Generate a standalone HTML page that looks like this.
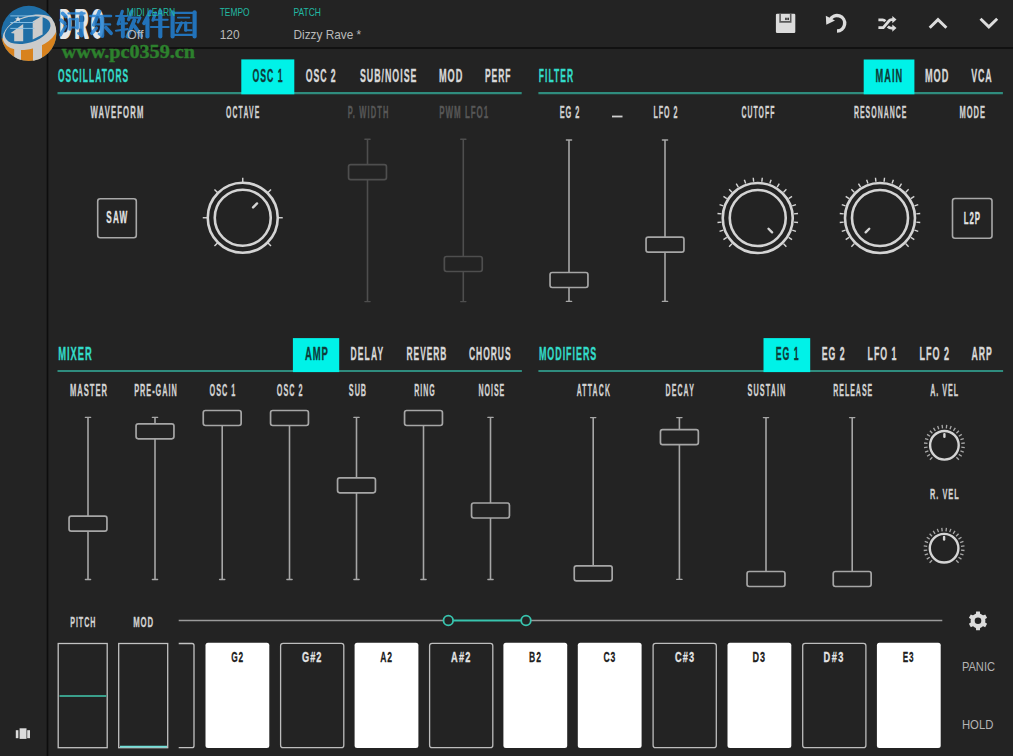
<!DOCTYPE html><html><head><meta charset="utf-8"><style>html,body{margin:0;padding:0;background:#232323;overflow:hidden}svg{display:block}</style></head><body>
<svg width="1013" height="756" viewBox="0 0 1013 756">
<rect x="0" y="0" width="1013" height="756" rx="0" fill="#232323"/>
<line x1="47.5" y1="0" x2="47.5" y2="756" stroke="#0d0d0d" stroke-width="1.6" stroke-linecap="butt"/>
<line x1="47.5" y1="48" x2="1013" y2="48" stroke="#0d0d0d" stroke-width="1.6" stroke-linecap="butt"/>
<rect x="775.9" y="13.8" width="19.4" height="19.2" rx="1.2" fill="#dcdcdc"/>
<path d="M780.1,13.8 V21.9 H790.7 V13.8" fill="none" stroke="#5a5a5a" stroke-width="1.6"/>
<rect x="785.1" y="17.7" width="1.7" height="2.4" fill="#3a3a3a"/><rect x="787.3" y="17.7" width="1.7" height="2.4" fill="#3a3a3a"/>
<path d="M830.2,19.6 A7.7,7.7 0 1 1 837,30.95" fill="none" stroke="#dcdcdc" stroke-width="3.4"/>
<path d="M825.8,15.8 L826.3,24.8 L835,20.6 Z" fill="#dcdcdc"/>
<g fill="none" stroke="#dcdcdc" stroke-width="2.9"><path d="M878.4,19.9 H882.6 Q884.2,19.9 885.3,21.2"/><path d="M878.4,27.6 H883.3 L889.2,20.7 Q890,19.6 891.5,19.6 H893"/><path d="M887.8,26.4 Q889.4,28.1 891.5,28.1 H893"/></g>
<path d="M892.3,15.9 L896.5,19.6 L892.3,23.3 Z" fill="#dcdcdc"/>
<path d="M892.3,24.4 L896.5,28.1 L892.3,31.8 Z" fill="#dcdcdc"/>
<path d="M929.7,27.7 L938,19.6 L946.4,27.8" fill="none" stroke="#dcdcdc" stroke-width="2.9"/>
<path d="M980.5,18.8 L988.85,26.9 L997.2,18.8" fill="none" stroke="#dcdcdc" stroke-width="2.9"/>
<text transform="translate(57.88 81.83) scale(0.4515458354715529 1)" font-family="Liberation Sans" font-weight="bold" font-size="18.70" fill="#33dbc9" stroke="#33dbc9" stroke-width="0.34" stroke-linejoin="round" textLength="155.79" lengthAdjust="spacing">OSCILLATORS</text>
<line x1="57.5" y1="93.2" x2="521.7" y2="93.2" stroke="#2f8c7e" stroke-width="2.2" stroke-linecap="butt"/>
<rect x="241.3" y="59.4" width="53" height="34.9" rx="0" fill="#00f2e8"/>
<text transform="translate(252.48 81.83) scale(0.45323925709619955 1)" font-family="Liberation Sans" font-weight="bold" font-size="19.26" fill="#0e3c3a" stroke="#0e3c3a" stroke-width="0.35" stroke-linejoin="round" textLength="66.28" lengthAdjust="spacing">OSC 1</text>
<text transform="translate(305.68 81.83) scale(0.45323925709619906 1)" font-family="Liberation Sans" font-weight="bold" font-size="19.26" fill="#d8d8d8" stroke="#d8d8d8" stroke-width="0.35" stroke-linejoin="round" textLength="66.28" lengthAdjust="spacing">OSC 2</text>
<text transform="translate(359.88 81.83) scale(0.45959786010638914 1)" font-family="Liberation Sans" font-weight="bold" font-size="19.26" fill="#d8d8d8" stroke="#d8d8d8" stroke-width="0.35" stroke-linejoin="round" textLength="123.02" lengthAdjust="spacing">SUB/NOISE</text>
<text transform="translate(438.98 81.83) scale(0.4784219513852827 1)" font-family="Liberation Sans" font-weight="bold" font-size="19.26" fill="#d8d8d8" stroke="#d8d8d8" stroke-width="0.35" stroke-linejoin="round" textLength="48.77" lengthAdjust="spacing">MOD</text>
<text transform="translate(484.88 81.83) scale(0.44381495753996325 1)" font-family="Liberation Sans" font-weight="bold" font-size="19.26" fill="#d8d8d8" stroke="#d8d8d8" stroke-width="0.35" stroke-linejoin="round" textLength="57.78" lengthAdjust="spacing">PERF</text>
<text transform="translate(90.57 117.86) scale(0.48680466664442634 1)" font-family="Liberation Sans" font-weight="bold" font-size="15.86" fill="#d2d2d2" stroke="#d2d2d2" stroke-width="0.29" stroke-linejoin="round" textLength="108.38" lengthAdjust="spacing">WAVEFORM</text>
<text transform="translate(225.96 117.86) scale(0.43266629425394754 1)" font-family="Liberation Sans" font-weight="bold" font-size="15.86" fill="#d2d2d2" stroke="#d2d2d2" stroke-width="0.29" stroke-linejoin="round" textLength="77.37" lengthAdjust="spacing">OCTAVE</text>
<text transform="translate(347.67 117.86) scale(0.47354475427535536 1)" font-family="Liberation Sans" font-weight="bold" font-size="15.86" fill="#575757" stroke="#575757" stroke-width="0.29" stroke-linejoin="round" textLength="85.87" lengthAdjust="spacing">P. WIDTH</text>
<text transform="translate(439.27 117.86) scale(0.5028939710948712 1)" font-family="Liberation Sans" font-weight="bold" font-size="15.86" fill="#575757" stroke="#575757" stroke-width="0.29" stroke-linejoin="round" textLength="97.35" lengthAdjust="spacing">PWM LFO1</text>
<rect x="97.7" y="198.7" width="38.6" height="39" rx="2.5" fill="none" stroke="#a8a8a8" stroke-width="1.6"/>
<text transform="translate(106.27 223.45) scale(0.49829545345565757 1)" font-family="Liberation Sans" font-weight="bold" font-size="16.43" fill="#e2e2e2" stroke="#e2e2e2" stroke-width="0.30" stroke-linejoin="round" textLength="42.05" lengthAdjust="spacing">SAW</text>
<line x1="218.00" y1="242.50" x2="214.47" y2="246.03" stroke="#d4d4d4" stroke-width="1.4"/>
<line x1="207.75" y1="217.75" x2="202.75" y2="217.75" stroke="#d4d4d4" stroke-width="1.4"/>
<line x1="218.00" y1="193.00" x2="214.47" y2="189.47" stroke="#d4d4d4" stroke-width="1.4"/>
<line x1="242.75" y1="182.75" x2="242.75" y2="177.75" stroke="#d4d4d4" stroke-width="1.4"/>
<line x1="267.50" y1="193.00" x2="271.03" y2="189.47" stroke="#d4d4d4" stroke-width="1.4"/>
<line x1="277.75" y1="217.75" x2="282.75" y2="217.75" stroke="#d4d4d4" stroke-width="1.4"/>
<line x1="267.50" y1="242.50" x2="271.03" y2="246.03" stroke="#d4d4d4" stroke-width="1.4"/>
<circle cx="242.75" cy="217.75" r="35" fill="#232323" stroke="#d4d4d4" stroke-width="2.6"/>
<circle cx="242.75" cy="217.75" r="28" fill="none" stroke="#d4d4d4" stroke-width="2.6"/>
<line x1="253.07" y1="207.43" x2="257.03" y2="203.47" stroke="#d4d4d4" stroke-width="2.4" stroke-linecap="round"/>
<line x1="367.5" y1="139.3" x2="367.5" y2="301.6" stroke="#4e4e4e" stroke-width="1.6" stroke-linecap="butt"/>
<line x1="364.9" y1="139.3" x2="370.1" y2="139.3" stroke="#4e4e4e" stroke-width="1.4" stroke-linecap="round"/>
<line x1="364.9" y1="301.6" x2="370.1" y2="301.6" stroke="#4e4e4e" stroke-width="1.4" stroke-linecap="round"/>
<rect x="348.55" y="164.6" width="37.9" height="15" rx="2.2" fill="#232323" stroke="#4e4e4e" stroke-width="1.7"/>
<line x1="463.3" y1="139.3" x2="463.3" y2="301.6" stroke="#4e4e4e" stroke-width="1.6" stroke-linecap="butt"/>
<line x1="460.7" y1="139.3" x2="465.90000000000003" y2="139.3" stroke="#4e4e4e" stroke-width="1.4" stroke-linecap="round"/>
<line x1="460.7" y1="301.6" x2="465.90000000000003" y2="301.6" stroke="#4e4e4e" stroke-width="1.4" stroke-linecap="round"/>
<rect x="444.35" y="256.5" width="37.9" height="15" rx="2.2" fill="#232323" stroke="#4e4e4e" stroke-width="1.7"/>
<text transform="translate(538.68 81.83) scale(0.45394454922138344 1)" font-family="Liberation Sans" font-weight="bold" font-size="18.70" fill="#33dbc9" stroke="#33dbc9" stroke-width="0.34" stroke-linejoin="round" textLength="76.10" lengthAdjust="spacing">FILTER</text>
<line x1="538.4" y1="93.2" x2="1002.9" y2="93.2" stroke="#2f8c7e" stroke-width="2.2" stroke-linecap="butt"/>
<rect x="863.7" y="59.5" width="50.7" height="34.8" rx="0" fill="#00f2e8"/>
<text transform="translate(875.58 81.83) scale(0.4815222890879221 1)" font-family="Liberation Sans" font-weight="bold" font-size="19.26" fill="#0e3c3a" stroke="#0e3c3a" stroke-width="0.35" stroke-linejoin="round" textLength="55.10" lengthAdjust="spacing">MAIN</text>
<text transform="translate(924.98 81.83) scale(0.4784219513852827 1)" font-family="Liberation Sans" font-weight="bold" font-size="19.26" fill="#d8d8d8" stroke="#d8d8d8" stroke-width="0.35" stroke-linejoin="round" textLength="48.77" lengthAdjust="spacing">MOD</text>
<text transform="translate(971.18 81.83) scale(0.45980607496872955 1)" font-family="Liberation Sans" font-weight="bold" font-size="19.26" fill="#d8d8d8" stroke="#d8d8d8" stroke-width="0.35" stroke-linejoin="round" textLength="44.67" lengthAdjust="spacing">VCA</text>
<text transform="translate(559.67 117.86) scale(0.46474117338328036 1)" font-family="Liberation Sans" font-weight="bold" font-size="15.86" fill="#d2d2d2" stroke="#d2d2d2" stroke-width="0.29" stroke-linejoin="round" textLength="42.32" lengthAdjust="spacing">EG 2</text>
<line x1="612" y1="116.5" x2="622.5" y2="116.5" stroke="#cfcfcf" stroke-width="1.8" stroke-linecap="butt"/>
<text transform="translate(653.46 117.86) scale(0.4494055879843714 1)" font-family="Liberation Sans" font-weight="bold" font-size="15.86" fill="#d2d2d2" stroke="#d2d2d2" stroke-width="0.29" stroke-linejoin="round" textLength="53.56" lengthAdjust="spacing">LFO 2</text>
<text transform="translate(741.56 117.86) scale(0.4337670232605606 1)" font-family="Liberation Sans" font-weight="bold" font-size="15.86" fill="#d2d2d2" stroke="#d2d2d2" stroke-width="0.29" stroke-linejoin="round" textLength="75.56" lengthAdjust="spacing">CUTOFF</text>
<text transform="translate(853.96 117.86) scale(0.4390285510505593 1)" font-family="Liberation Sans" font-weight="bold" font-size="15.86" fill="#d2d2d2" stroke="#d2d2d2" stroke-width="0.29" stroke-linejoin="round" textLength="119.30" lengthAdjust="spacing">RESONANCE</text>
<text transform="translate(959.47 117.86) scale(0.474894239343678 1)" font-family="Liberation Sans" font-weight="bold" font-size="15.86" fill="#d2d2d2" stroke="#d2d2d2" stroke-width="0.29" stroke-linejoin="round" textLength="53.62" lengthAdjust="spacing">MODE</text>
<line x1="569" y1="140" x2="569" y2="301.4" stroke="#a6a6a6" stroke-width="1.6" stroke-linecap="butt"/>
<line x1="566.4" y1="140" x2="571.6" y2="140" stroke="#a6a6a6" stroke-width="1.4" stroke-linecap="round"/>
<line x1="566.4" y1="301.4" x2="571.6" y2="301.4" stroke="#a6a6a6" stroke-width="1.4" stroke-linecap="round"/>
<rect x="550.05" y="272.5" width="37.9" height="15" rx="2.2" fill="#232323" stroke="#a6a6a6" stroke-width="1.7"/>
<line x1="665" y1="140" x2="665" y2="301.4" stroke="#a6a6a6" stroke-width="1.6" stroke-linecap="butt"/>
<line x1="662.4" y1="140" x2="667.6" y2="140" stroke="#a6a6a6" stroke-width="1.4" stroke-linecap="round"/>
<line x1="662.4" y1="301.4" x2="667.6" y2="301.4" stroke="#a6a6a6" stroke-width="1.4" stroke-linecap="round"/>
<rect x="646.05" y="237.1" width="37.9" height="15" rx="2.2" fill="#232323" stroke="#a6a6a6" stroke-width="1.7"/>
<line x1="731.94" y1="243.81" x2="729.11" y2="246.64" stroke="#d4d4d4" stroke-width="1.4"/>
<line x1="726.84" y1="237.42" x2="723.46" y2="239.55" stroke="#d4d4d4" stroke-width="1.4"/>
<line x1="723.30" y1="230.06" x2="719.52" y2="231.38" stroke="#d4d4d4" stroke-width="1.4"/>
<line x1="721.48" y1="222.09" x2="717.50" y2="222.53" stroke="#d4d4d4" stroke-width="1.4"/>
<line x1="721.48" y1="213.91" x2="717.50" y2="213.47" stroke="#d4d4d4" stroke-width="1.4"/>
<line x1="723.30" y1="205.94" x2="719.52" y2="204.62" stroke="#d4d4d4" stroke-width="1.4"/>
<line x1="726.84" y1="198.58" x2="723.46" y2="196.45" stroke="#d4d4d4" stroke-width="1.4"/>
<line x1="731.94" y1="192.19" x2="729.11" y2="189.36" stroke="#d4d4d4" stroke-width="1.4"/>
<line x1="738.33" y1="187.09" x2="736.20" y2="183.71" stroke="#d4d4d4" stroke-width="1.4"/>
<line x1="745.69" y1="183.55" x2="744.37" y2="179.77" stroke="#d4d4d4" stroke-width="1.4"/>
<line x1="753.66" y1="181.73" x2="753.22" y2="177.75" stroke="#d4d4d4" stroke-width="1.4"/>
<line x1="761.84" y1="181.73" x2="762.28" y2="177.75" stroke="#d4d4d4" stroke-width="1.4"/>
<line x1="769.81" y1="183.55" x2="771.13" y2="179.77" stroke="#d4d4d4" stroke-width="1.4"/>
<line x1="777.17" y1="187.09" x2="779.30" y2="183.71" stroke="#d4d4d4" stroke-width="1.4"/>
<line x1="783.56" y1="192.19" x2="786.39" y2="189.36" stroke="#d4d4d4" stroke-width="1.4"/>
<line x1="788.66" y1="198.58" x2="792.04" y2="196.45" stroke="#d4d4d4" stroke-width="1.4"/>
<line x1="792.20" y1="205.94" x2="795.98" y2="204.62" stroke="#d4d4d4" stroke-width="1.4"/>
<line x1="794.02" y1="213.91" x2="798.00" y2="213.47" stroke="#d4d4d4" stroke-width="1.4"/>
<line x1="794.02" y1="222.09" x2="798.00" y2="222.53" stroke="#d4d4d4" stroke-width="1.4"/>
<line x1="792.20" y1="230.06" x2="795.98" y2="231.38" stroke="#d4d4d4" stroke-width="1.4"/>
<line x1="788.66" y1="237.42" x2="792.04" y2="239.55" stroke="#d4d4d4" stroke-width="1.4"/>
<line x1="783.56" y1="243.81" x2="786.39" y2="246.64" stroke="#d4d4d4" stroke-width="1.4"/>
<circle cx="757.75" cy="218" r="35" fill="#232323" stroke="#d4d4d4" stroke-width="2.6"/>
<circle cx="757.75" cy="218" r="28" fill="none" stroke="#d4d4d4" stroke-width="2.6"/>
<line x1="768.50" y1="228.75" x2="772.10" y2="232.35" stroke="#d4d4d4" stroke-width="2.4" stroke-linecap="round"/>
<line x1="854.19" y1="243.81" x2="851.36" y2="246.64" stroke="#d4d4d4" stroke-width="1.4"/>
<line x1="849.09" y1="237.42" x2="845.71" y2="239.55" stroke="#d4d4d4" stroke-width="1.4"/>
<line x1="845.55" y1="230.06" x2="841.77" y2="231.38" stroke="#d4d4d4" stroke-width="1.4"/>
<line x1="843.73" y1="222.09" x2="839.75" y2="222.53" stroke="#d4d4d4" stroke-width="1.4"/>
<line x1="843.73" y1="213.91" x2="839.75" y2="213.47" stroke="#d4d4d4" stroke-width="1.4"/>
<line x1="845.55" y1="205.94" x2="841.77" y2="204.62" stroke="#d4d4d4" stroke-width="1.4"/>
<line x1="849.09" y1="198.58" x2="845.71" y2="196.45" stroke="#d4d4d4" stroke-width="1.4"/>
<line x1="854.19" y1="192.19" x2="851.36" y2="189.36" stroke="#d4d4d4" stroke-width="1.4"/>
<line x1="860.58" y1="187.09" x2="858.45" y2="183.71" stroke="#d4d4d4" stroke-width="1.4"/>
<line x1="867.94" y1="183.55" x2="866.62" y2="179.77" stroke="#d4d4d4" stroke-width="1.4"/>
<line x1="875.91" y1="181.73" x2="875.47" y2="177.75" stroke="#d4d4d4" stroke-width="1.4"/>
<line x1="884.09" y1="181.73" x2="884.53" y2="177.75" stroke="#d4d4d4" stroke-width="1.4"/>
<line x1="892.06" y1="183.55" x2="893.38" y2="179.77" stroke="#d4d4d4" stroke-width="1.4"/>
<line x1="899.42" y1="187.09" x2="901.55" y2="183.71" stroke="#d4d4d4" stroke-width="1.4"/>
<line x1="905.81" y1="192.19" x2="908.64" y2="189.36" stroke="#d4d4d4" stroke-width="1.4"/>
<line x1="910.91" y1="198.58" x2="914.29" y2="196.45" stroke="#d4d4d4" stroke-width="1.4"/>
<line x1="914.45" y1="205.94" x2="918.23" y2="204.62" stroke="#d4d4d4" stroke-width="1.4"/>
<line x1="916.27" y1="213.91" x2="920.25" y2="213.47" stroke="#d4d4d4" stroke-width="1.4"/>
<line x1="916.27" y1="222.09" x2="920.25" y2="222.53" stroke="#d4d4d4" stroke-width="1.4"/>
<line x1="914.45" y1="230.06" x2="918.23" y2="231.38" stroke="#d4d4d4" stroke-width="1.4"/>
<line x1="910.91" y1="237.42" x2="914.29" y2="239.55" stroke="#d4d4d4" stroke-width="1.4"/>
<line x1="905.81" y1="243.81" x2="908.64" y2="246.64" stroke="#d4d4d4" stroke-width="1.4"/>
<circle cx="880" cy="218" r="35" fill="#232323" stroke="#d4d4d4" stroke-width="2.6"/>
<circle cx="880" cy="218" r="28" fill="none" stroke="#d4d4d4" stroke-width="2.6"/>
<line x1="869.25" y1="228.75" x2="865.65" y2="232.35" stroke="#d4d4d4" stroke-width="2.4" stroke-linecap="round"/>
<rect x="952.5" y="198.5" width="39.5" height="39.8" rx="2.5" fill="none" stroke="#a8a8a8" stroke-width="1.6"/>
<text transform="translate(963.67 223.55) scale(0.4862837410862108 1)" font-family="Liberation Sans" font-weight="bold" font-size="16.15" fill="#e2e2e2" stroke="#e2e2e2" stroke-width="0.29" stroke-linejoin="round" textLength="33.43" lengthAdjust="spacing">L2P</text>
<text transform="translate(58.28 360.04) scale(0.5254926571071215 1)" font-family="Liberation Sans" font-weight="bold" font-size="17.85" fill="#33dbc9" stroke="#33dbc9" stroke-width="0.32" stroke-linejoin="round" textLength="63.81" lengthAdjust="spacing">MIXER</text>
<line x1="57.5" y1="371" x2="521.9" y2="371" stroke="#2f8c7e" stroke-width="2.2" stroke-linecap="butt"/>
<rect x="292.9" y="338.1" width="46.3" height="34.0" rx="0" fill="#00f2e8"/>
<text transform="translate(304.89 359.74) scale(0.522152073696058 1)" font-family="Liberation Sans" font-weight="bold" font-size="18.27" fill="#0e3c3a" stroke="#0e3c3a" stroke-width="0.33" stroke-linejoin="round" textLength="44.10" lengthAdjust="spacing">AMP</text>
<text transform="translate(350.48 359.74) scale(0.4634766231016883 1)" font-family="Liberation Sans" font-weight="bold" font-size="18.27" fill="#d8d8d8" stroke="#d8d8d8" stroke-width="0.33" stroke-linejoin="round" textLength="70.22" lengthAdjust="spacing">DELAY</text>
<text transform="translate(406.58 359.74) scale(0.45965554187903657 1)" font-family="Liberation Sans" font-weight="bold" font-size="18.27" fill="#d8d8d8" stroke="#d8d8d8" stroke-width="0.33" stroke-linejoin="round" textLength="86.69" lengthAdjust="spacing">REVERB</text>
<text transform="translate(468.98 359.74) scale(0.46478000752580406 1)" font-family="Liberation Sans" font-weight="bold" font-size="18.27" fill="#d8d8d8" stroke="#d8d8d8" stroke-width="0.33" stroke-linejoin="round" textLength="89.61" lengthAdjust="spacing">CHORUS</text>
<text transform="translate(69.97 395.56) scale(0.4807619433727961 1)" font-family="Liberation Sans" font-weight="bold" font-size="15.86" fill="#d2d2d2" stroke="#d2d2d2" stroke-width="0.29" stroke-linejoin="round" textLength="77.09" lengthAdjust="spacing">MASTER</text>
<text transform="translate(134.17 395.56) scale(0.4615922194672877 1)" font-family="Liberation Sans" font-weight="bold" font-size="15.86" fill="#d2d2d2" stroke="#d2d2d2" stroke-width="0.29" stroke-linejoin="round" textLength="92.44" lengthAdjust="spacing">PRE-GAIN</text>
<text transform="translate(209.47 395.56) scale(0.46213599278620104 1)" font-family="Liberation Sans" font-weight="bold" font-size="15.86" fill="#d2d2d2" stroke="#d2d2d2" stroke-width="0.29" stroke-linejoin="round" textLength="55.97" lengthAdjust="spacing">OSC 1</text>
<text transform="translate(276.87 395.56) scale(0.4579347564881449 1)" font-family="Liberation Sans" font-weight="bold" font-size="15.86" fill="#d2d2d2" stroke="#d2d2d2" stroke-width="0.29" stroke-linejoin="round" textLength="56.05" lengthAdjust="spacing">OSC 2</text>
<text transform="translate(348.87 395.56) scale(0.4598060749687306 1)" font-family="Liberation Sans" font-weight="bold" font-size="15.86" fill="#d2d2d2" stroke="#d2d2d2" stroke-width="0.29" stroke-linejoin="round" textLength="37.56" lengthAdjust="spacing">SUB</text>
<text transform="translate(414.26 395.56) scale(0.4437949705724993 1)" font-family="Liberation Sans" font-weight="bold" font-size="15.86" fill="#d2d2d2" stroke="#d2d2d2" stroke-width="0.29" stroke-linejoin="round" textLength="46.13" lengthAdjust="spacing">RING</text>
<text transform="translate(478.46 395.56) scale(0.4456751626649916 1)" font-family="Liberation Sans" font-weight="bold" font-size="15.86" fill="#d2d2d2" stroke="#d2d2d2" stroke-width="0.29" stroke-linejoin="round" textLength="58.05" lengthAdjust="spacing">NOISE</text>
<line x1="88" y1="417.4" x2="88" y2="579.5" stroke="#a6a6a6" stroke-width="1.6" stroke-linecap="butt"/>
<line x1="85.4" y1="417.4" x2="90.6" y2="417.4" stroke="#a6a6a6" stroke-width="1.4" stroke-linecap="round"/>
<line x1="85.4" y1="579.5" x2="90.6" y2="579.5" stroke="#a6a6a6" stroke-width="1.4" stroke-linecap="round"/>
<rect x="69.05" y="516.2" width="37.9" height="15" rx="2.2" fill="#232323" stroke="#a6a6a6" stroke-width="1.7"/>
<line x1="155" y1="417.4" x2="155" y2="579.5" stroke="#a6a6a6" stroke-width="1.6" stroke-linecap="butt"/>
<line x1="152.4" y1="417.4" x2="157.6" y2="417.4" stroke="#a6a6a6" stroke-width="1.4" stroke-linecap="round"/>
<line x1="152.4" y1="579.5" x2="157.6" y2="579.5" stroke="#a6a6a6" stroke-width="1.4" stroke-linecap="round"/>
<rect x="136.05" y="423.8" width="37.9" height="15" rx="2.2" fill="#232323" stroke="#a6a6a6" stroke-width="1.7"/>
<line x1="222.2" y1="417.4" x2="222.2" y2="579.5" stroke="#a6a6a6" stroke-width="1.6" stroke-linecap="butt"/>
<line x1="219.6" y1="417.4" x2="224.79999999999998" y2="417.4" stroke="#a6a6a6" stroke-width="1.4" stroke-linecap="round"/>
<line x1="219.6" y1="579.5" x2="224.79999999999998" y2="579.5" stroke="#a6a6a6" stroke-width="1.4" stroke-linecap="round"/>
<rect x="203.25" y="410.5" width="37.9" height="15" rx="2.2" fill="#232323" stroke="#a6a6a6" stroke-width="1.7"/>
<line x1="289.5" y1="417.4" x2="289.5" y2="579.5" stroke="#a6a6a6" stroke-width="1.6" stroke-linecap="butt"/>
<line x1="286.9" y1="417.4" x2="292.1" y2="417.4" stroke="#a6a6a6" stroke-width="1.4" stroke-linecap="round"/>
<line x1="286.9" y1="579.5" x2="292.1" y2="579.5" stroke="#a6a6a6" stroke-width="1.4" stroke-linecap="round"/>
<rect x="270.55" y="410.5" width="37.9" height="15" rx="2.2" fill="#232323" stroke="#a6a6a6" stroke-width="1.7"/>
<line x1="356.5" y1="417.4" x2="356.5" y2="579.5" stroke="#a6a6a6" stroke-width="1.6" stroke-linecap="butt"/>
<line x1="353.9" y1="417.4" x2="359.1" y2="417.4" stroke="#a6a6a6" stroke-width="1.4" stroke-linecap="round"/>
<line x1="353.9" y1="579.5" x2="359.1" y2="579.5" stroke="#a6a6a6" stroke-width="1.4" stroke-linecap="round"/>
<rect x="337.55" y="477.8" width="37.9" height="15" rx="2.2" fill="#232323" stroke="#a6a6a6" stroke-width="1.7"/>
<line x1="423.5" y1="417.4" x2="423.5" y2="579.5" stroke="#a6a6a6" stroke-width="1.6" stroke-linecap="butt"/>
<line x1="420.9" y1="417.4" x2="426.1" y2="417.4" stroke="#a6a6a6" stroke-width="1.4" stroke-linecap="round"/>
<line x1="420.9" y1="579.5" x2="426.1" y2="579.5" stroke="#a6a6a6" stroke-width="1.4" stroke-linecap="round"/>
<rect x="404.55" y="410.5" width="37.9" height="15" rx="2.2" fill="#232323" stroke="#a6a6a6" stroke-width="1.7"/>
<line x1="490.5" y1="417.4" x2="490.5" y2="579.5" stroke="#a6a6a6" stroke-width="1.6" stroke-linecap="butt"/>
<line x1="487.9" y1="417.4" x2="493.1" y2="417.4" stroke="#a6a6a6" stroke-width="1.4" stroke-linecap="round"/>
<line x1="487.9" y1="579.5" x2="493.1" y2="579.5" stroke="#a6a6a6" stroke-width="1.4" stroke-linecap="round"/>
<rect x="471.55" y="503.0" width="37.9" height="15" rx="2.2" fill="#232323" stroke="#a6a6a6" stroke-width="1.7"/>
<text transform="translate(538.88 360.04) scale(0.5002681959639781 1)" font-family="Liberation Sans" font-weight="bold" font-size="17.85" fill="#33dbc9" stroke="#33dbc9" stroke-width="0.32" stroke-linejoin="round" textLength="114.82" lengthAdjust="spacing">MODIFIERS</text>
<line x1="538.4" y1="371" x2="1003.1" y2="371" stroke="#2f8c7e" stroke-width="2.2" stroke-linecap="butt"/>
<rect x="763.5" y="338.1" width="46.7" height="34.0" rx="0" fill="#00f2e8"/>
<text transform="translate(775.68 359.74) scale(0.48035263398788786 1)" font-family="Liberation Sans" font-weight="bold" font-size="18.27" fill="#0e3c3a" stroke="#0e3c3a" stroke-width="0.33" stroke-linejoin="round" textLength="47.55" lengthAdjust="spacing">EG 1</text>
<text transform="translate(821.68 359.74) scale(0.48035263398788786 1)" font-family="Liberation Sans" font-weight="bold" font-size="18.27" fill="#d8d8d8" stroke="#d8d8d8" stroke-width="0.33" stroke-linejoin="round" textLength="47.55" lengthAdjust="spacing">EG 2</text>
<text transform="translate(867.58 359.74) scale(0.4828980145660591 1)" font-family="Liberation Sans" font-weight="bold" font-size="18.27" fill="#d8d8d8" stroke="#d8d8d8" stroke-width="0.33" stroke-linejoin="round" textLength="59.72" lengthAdjust="spacing">LFO 1</text>
<text transform="translate(919.58 359.74) scale(0.4964191589739096 1)" font-family="Liberation Sans" font-weight="bold" font-size="18.27" fill="#d8d8d8" stroke="#d8d8d8" stroke-width="0.33" stroke-linejoin="round" textLength="59.50" lengthAdjust="spacing">LFO 2</text>
<text transform="translate(971.48 359.74) scale(0.47697994528116383 1)" font-family="Liberation Sans" font-weight="bold" font-size="18.27" fill="#d8d8d8" stroke="#d8d8d8" stroke-width="0.33" stroke-linejoin="round" textLength="42.44" lengthAdjust="spacing">ARP</text>
<text transform="translate(576.66 395.56) scale(0.43556110202843096 1)" font-family="Liberation Sans" font-weight="bold" font-size="15.86" fill="#d2d2d2" stroke="#d2d2d2" stroke-width="0.29" stroke-linejoin="round" textLength="76.40" lengthAdjust="spacing">ATTACK</text>
<text transform="translate(665.46 395.56) scale(0.44121185524650197 1)" font-family="Liberation Sans" font-weight="bold" font-size="15.86" fill="#d2d2d2" stroke="#d2d2d2" stroke-width="0.29" stroke-linejoin="round" textLength="64.31" lengthAdjust="spacing">DECAY</text>
<text transform="translate(747.47 395.56) scale(0.4595981450725014 1)" font-family="Liberation Sans" font-weight="bold" font-size="15.86" fill="#d2d2d2" stroke="#d2d2d2" stroke-width="0.29" stroke-linejoin="round" textLength="82.39" lengthAdjust="spacing">SUSTAIN</text>
<text transform="translate(833.26 395.56) scale(0.44178043178330434 1)" font-family="Liberation Sans" font-weight="bold" font-size="15.86" fill="#d2d2d2" stroke="#d2d2d2" stroke-width="0.29" stroke-linejoin="round" textLength="88.22" lengthAdjust="spacing">RELEASE</text>
<text transform="translate(930.16 395.56) scale(0.4538200911198651 1)" font-family="Liberation Sans" font-weight="bold" font-size="15.86" fill="#d2d2d2" stroke="#d2d2d2" stroke-width="0.29" stroke-linejoin="round" textLength="61.85" lengthAdjust="spacing">A. VEL</text>
<text transform="translate(930.07 498.56) scale(0.47636034873005995 1)" font-family="Liberation Sans" font-weight="bold" font-size="15.44" fill="#d2d2d2" stroke="#d2d2d2" stroke-width="0.28" stroke-linejoin="round" textLength="59.97" lengthAdjust="spacing">R. VEL</text>
<line x1="593.2" y1="417.6" x2="593.2" y2="579.4" stroke="#a6a6a6" stroke-width="1.6" stroke-linecap="butt"/>
<line x1="590.6" y1="417.6" x2="595.8000000000001" y2="417.6" stroke="#a6a6a6" stroke-width="1.4" stroke-linecap="round"/>
<line x1="590.6" y1="579.4" x2="595.8000000000001" y2="579.4" stroke="#a6a6a6" stroke-width="1.4" stroke-linecap="round"/>
<rect x="574.25" y="565.9" width="37.9" height="15" rx="2.2" fill="#232323" stroke="#a6a6a6" stroke-width="1.7"/>
<line x1="679.4" y1="417.6" x2="679.4" y2="579.4" stroke="#a6a6a6" stroke-width="1.6" stroke-linecap="butt"/>
<line x1="676.8" y1="417.6" x2="682.0" y2="417.6" stroke="#a6a6a6" stroke-width="1.4" stroke-linecap="round"/>
<line x1="676.8" y1="579.4" x2="682.0" y2="579.4" stroke="#a6a6a6" stroke-width="1.4" stroke-linecap="round"/>
<rect x="660.4499999999999" y="429.7" width="37.9" height="15" rx="2.2" fill="#232323" stroke="#a6a6a6" stroke-width="1.7"/>
<line x1="766" y1="417.6" x2="766" y2="579.4" stroke="#a6a6a6" stroke-width="1.6" stroke-linecap="butt"/>
<line x1="763.4" y1="417.6" x2="768.6" y2="417.6" stroke="#a6a6a6" stroke-width="1.4" stroke-linecap="round"/>
<line x1="763.4" y1="579.4" x2="768.6" y2="579.4" stroke="#a6a6a6" stroke-width="1.4" stroke-linecap="round"/>
<rect x="747.05" y="571.5" width="37.9" height="15" rx="2.2" fill="#232323" stroke="#a6a6a6" stroke-width="1.7"/>
<line x1="852.2" y1="417.6" x2="852.2" y2="579.4" stroke="#a6a6a6" stroke-width="1.6" stroke-linecap="butt"/>
<line x1="849.6" y1="417.6" x2="854.8000000000001" y2="417.6" stroke="#a6a6a6" stroke-width="1.4" stroke-linecap="round"/>
<line x1="849.6" y1="579.4" x2="854.8000000000001" y2="579.4" stroke="#a6a6a6" stroke-width="1.4" stroke-linecap="round"/>
<rect x="833.25" y="571.5" width="37.9" height="15" rx="2.2" fill="#232323" stroke="#a6a6a6" stroke-width="1.7"/>
<line x1="932.38" y1="457.32" x2="929.90" y2="459.80" stroke="#a8a8a8" stroke-width="1.3"/>
<line x1="930.01" y1="454.34" x2="927.04" y2="456.21" stroke="#a8a8a8" stroke-width="1.3"/>
<line x1="928.35" y1="450.91" x2="925.05" y2="452.07" stroke="#a8a8a8" stroke-width="1.3"/>
<line x1="927.51" y1="447.20" x2="924.03" y2="447.60" stroke="#a8a8a8" stroke-width="1.3"/>
<line x1="927.51" y1="443.40" x2="924.03" y2="443.00" stroke="#a8a8a8" stroke-width="1.3"/>
<line x1="928.35" y1="439.69" x2="925.05" y2="438.53" stroke="#a8a8a8" stroke-width="1.3"/>
<line x1="930.01" y1="436.26" x2="927.04" y2="434.39" stroke="#a8a8a8" stroke-width="1.3"/>
<line x1="932.38" y1="433.28" x2="929.90" y2="430.80" stroke="#a8a8a8" stroke-width="1.3"/>
<line x1="935.36" y1="430.91" x2="933.49" y2="427.94" stroke="#a8a8a8" stroke-width="1.3"/>
<line x1="938.79" y1="429.25" x2="937.63" y2="425.95" stroke="#a8a8a8" stroke-width="1.3"/>
<line x1="942.50" y1="428.41" x2="942.10" y2="424.93" stroke="#a8a8a8" stroke-width="1.3"/>
<line x1="946.30" y1="428.41" x2="946.70" y2="424.93" stroke="#a8a8a8" stroke-width="1.3"/>
<line x1="950.01" y1="429.25" x2="951.17" y2="425.95" stroke="#a8a8a8" stroke-width="1.3"/>
<line x1="953.44" y1="430.91" x2="955.31" y2="427.94" stroke="#a8a8a8" stroke-width="1.3"/>
<line x1="956.42" y1="433.28" x2="958.90" y2="430.80" stroke="#a8a8a8" stroke-width="1.3"/>
<line x1="958.79" y1="436.26" x2="961.76" y2="434.39" stroke="#a8a8a8" stroke-width="1.3"/>
<line x1="960.45" y1="439.69" x2="963.75" y2="438.53" stroke="#a8a8a8" stroke-width="1.3"/>
<line x1="961.29" y1="443.40" x2="964.77" y2="443.00" stroke="#a8a8a8" stroke-width="1.3"/>
<line x1="961.29" y1="447.20" x2="964.77" y2="447.60" stroke="#a8a8a8" stroke-width="1.3"/>
<line x1="960.45" y1="450.91" x2="963.75" y2="452.07" stroke="#a8a8a8" stroke-width="1.3"/>
<line x1="958.79" y1="454.34" x2="961.76" y2="456.21" stroke="#a8a8a8" stroke-width="1.3"/>
<line x1="956.42" y1="457.32" x2="958.90" y2="459.80" stroke="#a8a8a8" stroke-width="1.3"/>
<circle cx="944.4" cy="445.3" r="14.3" fill="#232323" stroke="#d4d4d4" stroke-width="2.4"/>
<line x1="944.40" y1="436.70" x2="944.40" y2="434.10" stroke="#d4d4d4" stroke-width="2.4" stroke-linecap="round"/>
<line x1="932.08" y1="560.22" x2="929.60" y2="562.70" stroke="#a8a8a8" stroke-width="1.3"/>
<line x1="929.71" y1="557.24" x2="926.74" y2="559.11" stroke="#a8a8a8" stroke-width="1.3"/>
<line x1="928.05" y1="553.81" x2="924.75" y2="554.97" stroke="#a8a8a8" stroke-width="1.3"/>
<line x1="927.21" y1="550.10" x2="923.73" y2="550.50" stroke="#a8a8a8" stroke-width="1.3"/>
<line x1="927.21" y1="546.30" x2="923.73" y2="545.90" stroke="#a8a8a8" stroke-width="1.3"/>
<line x1="928.05" y1="542.59" x2="924.75" y2="541.43" stroke="#a8a8a8" stroke-width="1.3"/>
<line x1="929.71" y1="539.16" x2="926.74" y2="537.29" stroke="#a8a8a8" stroke-width="1.3"/>
<line x1="932.08" y1="536.18" x2="929.60" y2="533.70" stroke="#a8a8a8" stroke-width="1.3"/>
<line x1="935.06" y1="533.81" x2="933.19" y2="530.84" stroke="#a8a8a8" stroke-width="1.3"/>
<line x1="938.49" y1="532.15" x2="937.33" y2="528.85" stroke="#a8a8a8" stroke-width="1.3"/>
<line x1="942.20" y1="531.31" x2="941.80" y2="527.83" stroke="#a8a8a8" stroke-width="1.3"/>
<line x1="946.00" y1="531.31" x2="946.40" y2="527.83" stroke="#a8a8a8" stroke-width="1.3"/>
<line x1="949.71" y1="532.15" x2="950.87" y2="528.85" stroke="#a8a8a8" stroke-width="1.3"/>
<line x1="953.14" y1="533.81" x2="955.01" y2="530.84" stroke="#a8a8a8" stroke-width="1.3"/>
<line x1="956.12" y1="536.18" x2="958.60" y2="533.70" stroke="#a8a8a8" stroke-width="1.3"/>
<line x1="958.49" y1="539.16" x2="961.46" y2="537.29" stroke="#a8a8a8" stroke-width="1.3"/>
<line x1="960.15" y1="542.59" x2="963.45" y2="541.43" stroke="#a8a8a8" stroke-width="1.3"/>
<line x1="960.99" y1="546.30" x2="964.47" y2="545.90" stroke="#a8a8a8" stroke-width="1.3"/>
<line x1="960.99" y1="550.10" x2="964.47" y2="550.50" stroke="#a8a8a8" stroke-width="1.3"/>
<line x1="960.15" y1="553.81" x2="963.45" y2="554.97" stroke="#a8a8a8" stroke-width="1.3"/>
<line x1="958.49" y1="557.24" x2="961.46" y2="559.11" stroke="#a8a8a8" stroke-width="1.3"/>
<line x1="956.12" y1="560.22" x2="958.60" y2="562.70" stroke="#a8a8a8" stroke-width="1.3"/>
<circle cx="944.1" cy="548.2" r="14.3" fill="#232323" stroke="#d4d4d4" stroke-width="2.4"/>
<line x1="944.10" y1="539.60" x2="944.10" y2="537.00" stroke="#d4d4d4" stroke-width="2.4" stroke-linecap="round"/>
<text transform="translate(70.16 626.56) scale(0.46205509168585146 1)" font-family="Liberation Sans" font-weight="bold" font-size="15.44" fill="#d2d2d2" stroke="#d2d2d2" stroke-width="0.28" stroke-linejoin="round" textLength="54.69" lengthAdjust="spacing">PITCH</text>
<text transform="translate(133.17 626.56) scale(0.5053083055553031 1)" font-family="Liberation Sans" font-weight="bold" font-size="15.44" fill="#d2d2d2" stroke="#d2d2d2" stroke-width="0.28" stroke-linejoin="round" textLength="39.70" lengthAdjust="spacing">MOD</text>
<line x1="178.7" y1="620.5" x2="448.3" y2="620.5" stroke="#9a9a9a" stroke-width="1.3" stroke-linecap="butt"/>
<line x1="526" y1="620.5" x2="942.3" y2="620.5" stroke="#9a9a9a" stroke-width="1.3" stroke-linecap="butt"/>
<line x1="448.3" y1="620.5" x2="526" y2="620.5" stroke="#38c4ae" stroke-width="1.8" stroke-linecap="butt"/>
<circle cx="448.3" cy="620.5" r="4.8" fill="#232323" stroke="#38c4ae" stroke-width="1.8"/>
<circle cx="526" cy="620.5" r="4.8" fill="#232323" stroke="#38c4ae" stroke-width="1.8"/>
<rect x="58.2" y="643.5" width="49" height="104.2" rx="0" fill="none" stroke="#c2c2c2" stroke-width="1.3"/>
<line x1="59.5" y1="696" x2="106.5" y2="696" stroke="#3a9f8b" stroke-width="1.9" stroke-linecap="butt"/>
<rect x="118.7" y="643.5" width="49" height="104.2" rx="0" fill="none" stroke="#c2c2c2" stroke-width="1.3"/>
<line x1="120" y1="746.6" x2="167" y2="746.6" stroke="#6fe0d8" stroke-width="1.8" stroke-linecap="butt"/>
<path d="M178.7,643.5 H192 a2,2 0 0 1 2,2 V745.7 a2,2 0 0 1 -2,2 H178.7" fill="none" stroke="#c2c2c2" stroke-width="1.3"/>
<rect x="205.5" y="642.7" width="63.8" height="105.2" rx="2.5" fill="#ffffff"/>
<text transform="translate(231.18 661.67) scale(0.5595136378627319 1)" font-family="Liberation Sans" font-weight="bold" font-size="14.87" fill="#202020" stroke="#202020" stroke-width="0.27" stroke-linejoin="round" textLength="21.36" lengthAdjust="spacing">G2</text>
<rect x="280.6" y="643.3" width="63.2" height="104.4" rx="2.5" fill="#232323" stroke="#bdbdbd" stroke-width="1.3"/>
<text transform="translate(301.98 661.67) scale(0.62 1)" font-family="Liberation Sans" font-weight="bold" font-size="14.87" fill="#e4e4e4" stroke="#e4e4e4" stroke-width="0.27" stroke-linejoin="round" textLength="31.34" lengthAdjust="spacing">G#2</text>
<rect x="354.6" y="642.7" width="63.8" height="105.2" rx="2.5" fill="#ffffff"/>
<text transform="translate(380.28 661.67) scale(0.5786173285793718 1)" font-family="Liberation Sans" font-weight="bold" font-size="14.87" fill="#202020" stroke="#202020" stroke-width="0.27" stroke-linejoin="round" textLength="20.47" lengthAdjust="spacing">A2</text>
<rect x="429.6" y="643.3" width="63.2" height="104.4" rx="2.5" fill="#232323" stroke="#bdbdbd" stroke-width="1.3"/>
<text transform="translate(451.08 661.67) scale(0.62 1)" font-family="Liberation Sans" font-weight="bold" font-size="14.87" fill="#e4e4e4" stroke="#e4e4e4" stroke-width="0.27" stroke-linejoin="round" textLength="31.18" lengthAdjust="spacing">A#2</text>
<rect x="503.4" y="642.7" width="63.8" height="105.2" rx="2.5" fill="#ffffff"/>
<text transform="translate(529.08 661.67) scale(0.5786173285793718 1)" font-family="Liberation Sans" font-weight="bold" font-size="14.87" fill="#202020" stroke="#202020" stroke-width="0.27" stroke-linejoin="round" textLength="20.47" lengthAdjust="spacing">B2</text>
<rect x="577.8" y="642.7" width="63.8" height="105.2" rx="2.5" fill="#ffffff"/>
<text transform="translate(603.48 661.67) scale(0.5786173285793718 1)" font-family="Liberation Sans" font-weight="bold" font-size="14.87" fill="#202020" stroke="#202020" stroke-width="0.27" stroke-linejoin="round" textLength="20.47" lengthAdjust="spacing">C3</text>
<rect x="653.1" y="643.3" width="63.2" height="104.4" rx="2.5" fill="#232323" stroke="#bdbdbd" stroke-width="1.3"/>
<text transform="translate(674.88 661.67) scale(0.62 1)" font-family="Liberation Sans" font-weight="bold" font-size="14.87" fill="#e4e4e4" stroke="#e4e4e4" stroke-width="0.27" stroke-linejoin="round" textLength="31.18" lengthAdjust="spacing">C#3</text>
<rect x="727.5" y="642.7" width="63.8" height="105.2" rx="2.5" fill="#ffffff"/>
<text transform="translate(752.58 661.67) scale(0.6101782737746114 1)" font-family="Liberation Sans" font-weight="bold" font-size="14.87" fill="#202020" stroke="#202020" stroke-width="0.27" stroke-linejoin="round" textLength="20.38" lengthAdjust="spacing">D3</text>
<rect x="802.7" y="643.3" width="63.2" height="104.4" rx="2.5" fill="#232323" stroke="#bdbdbd" stroke-width="1.3"/>
<text transform="translate(823.58 661.67) scale(0.62 1)" font-family="Liberation Sans" font-weight="bold" font-size="14.87" fill="#e4e4e4" stroke="#e4e4e4" stroke-width="0.27" stroke-linejoin="round" textLength="31.99" lengthAdjust="spacing">D#3</text>
<rect x="876.9" y="642.7" width="63.8" height="105.2" rx="2.5" fill="#ffffff"/>
<text transform="translate(902.77 661.67) scale(0.5497442083907804 1)" font-family="Liberation Sans" font-weight="bold" font-size="14.87" fill="#202020" stroke="#202020" stroke-width="0.27" stroke-linejoin="round" textLength="19.74" lengthAdjust="spacing">E3</text>
<circle cx="978" cy="620.8" r="7.4" fill="#dcdcdc"/><path d="M975.7,615.8 L976.1,611.4 H979.9 L980.3,615.8 Z" fill="#dcdcdc" transform="rotate(0 978 620.8)"/><path d="M975.7,615.8 L976.1,611.4 H979.9 L980.3,615.8 Z" fill="#dcdcdc" transform="rotate(60 978 620.8)"/><path d="M975.7,615.8 L976.1,611.4 H979.9 L980.3,615.8 Z" fill="#dcdcdc" transform="rotate(120 978 620.8)"/><path d="M975.7,615.8 L976.1,611.4 H979.9 L980.3,615.8 Z" fill="#dcdcdc" transform="rotate(180 978 620.8)"/><path d="M975.7,615.8 L976.1,611.4 H979.9 L980.3,615.8 Z" fill="#dcdcdc" transform="rotate(240 978 620.8)"/><path d="M975.7,615.8 L976.1,611.4 H979.9 L980.3,615.8 Z" fill="#dcdcdc" transform="rotate(300 978 620.8)"/><circle cx="978" cy="620.8" r="3.3" fill="#232323"/>
<text x="961.9" y="670.9" font-family="Liberation Sans" font-weight="normal" font-size="12.94" fill="#b4b4b4" textLength="33.1" lengthAdjust="spacingAndGlyphs">PANIC</text>
<text x="961.9" y="728.8" font-family="Liberation Sans" font-weight="normal" font-size="12.94" fill="#b4b4b4" textLength="31.5" lengthAdjust="spacingAndGlyphs">HOLD</text>
<rect x="15.8" y="730.2" width="2.6" height="8" rx="0" fill="#dcdcdc"/>
<rect x="19.6" y="728.3" width="6.9" height="10.6" rx="0" fill="#dcdcdc"/>
<rect x="27.2" y="730.2" width="2.8" height="8" rx="0" fill="#dcdcdc"/>
<text transform="translate(59.58 37.80) scale(0.42151257168707207 1)" font-family="Liberation Sans" font-weight="bold" font-size="40.41" fill="#e6e6e6" stroke="#e6e6e6" stroke-width="1.80" stroke-linejoin="round" textLength="27.38" lengthAdjust="spacing">D</text>
<text transform="translate(74.44 37.80) scale(0.48662426975255496 1)" font-family="Liberation Sans" font-weight="bold" font-size="40.41" fill="#e6e6e6" stroke="#e6e6e6" stroke-width="1.80" stroke-linejoin="round" textLength="27.38" lengthAdjust="spacing">R</text>
<text transform="translate(91.07 37.80) scale(0.41361965794595956 1)" font-family="Liberation Sans" font-weight="bold" font-size="40.41" fill="#e6e6e6" stroke="#e6e6e6" stroke-width="1.80" stroke-linejoin="round" textLength="29.63" lengthAdjust="spacing">O</text>
<defs><clipPath id="lc"><circle cx="28.8" cy="33.4" r="27.6"/></clipPath></defs>
<g clip-path="url(#lc)">
<rect x="0" y="0" width="60" height="65" fill="#1f6ea6"/>
<path d="M0,39 L60,21 V65 H0 Z" fill="#d8821d"/>
<rect x="14.2" y="35" width="6.8" height="30" fill="#cbcbcb"/>
<rect x="33" y="35" width="9" height="30" fill="#cbcbcb"/>
<ellipse cx="30" cy="32.3" rx="28" ry="16.5" transform="rotate(-17 30 32.3)" fill="#cbcbcb"/>
<ellipse cx="27.6" cy="30.2" rx="23.6" ry="12.6" transform="rotate(-17 27.6 30.2)" fill="#1f6ea6"/>
<path d="M10.7,33.1 L23.2,24.1 L23.2,41.3 L14.2,41.3 L14.2,33.5 Z" fill="#cbcbcb"/>
<path d="M32.7,21.5 L42.6,15.5 L42.6,34.4 L32.7,39.6 Z" fill="#cbcbcb"/>
<line x1="10.3" y1="15.9" x2="34.4" y2="15.9" stroke="#8cc4ea" stroke-width="0.9"/>
<line x1="10.3" y1="22.5" x2="34.4" y2="22.5" stroke="#8cc4ea" stroke-width="0.9"/>
<line x1="10.3" y1="28.4" x2="34.4" y2="28.4" stroke="#8cc4ea" stroke-width="0.9"/>
<path d="M18,16.3 L18.9,18.3 L21,18.4 L19.4,19.7 L20,21.8 L18,20.6 L16,21.8 L16.6,19.7 L15,18.4 L17.1,18.3 Z" fill="#e0e0e0"/>
</g>
<g fill="none" stroke="#2282d6" stroke-linecap="round" opacity="0.84">
<g transform="translate(59.5,10.8) scale(0.262)">
<line x1="12" y1="10" x2="24" y2="22" stroke-width="14"/>
<line x1="6" y1="36" x2="20" y2="48" stroke-width="14"/>
<line x1="4" y1="92" x2="24" y2="58" stroke-width="12"/>
<line x1="34" y1="10" x2="96" y2="10" stroke-width="8"/>
<line x1="84" y1="10" x2="84" y2="94" stroke-width="16"/>
<line x1="84" y1="94" x2="72" y2="86" stroke-width="10"/>
<line x1="40" y1="32" x2="40" y2="70" stroke-width="12"/>
<line x1="40" y1="32" x2="68" y2="32" stroke-width="8"/>
<line x1="68" y1="32" x2="68" y2="66" stroke-width="12"/>
<line x1="40" y1="64" x2="68" y2="64" stroke-width="8"/>
</g>
<g transform="translate(87.5,10.8) scale(0.262)">
<line x1="10" y1="20" x2="90" y2="20" stroke-width="9"/>
<line x1="46" y1="2" x2="24" y2="54" stroke-width="14"/>
<line x1="24" y1="52" x2="86" y2="52" stroke-width="9"/>
<line x1="56" y1="28" x2="56" y2="96" stroke-width="16"/>
<line x1="56" y1="96" x2="44" y2="88" stroke-width="10"/>
<line x1="34" y1="66" x2="16" y2="86" stroke-width="13"/>
<line x1="70" y1="64" x2="90" y2="86" stroke-width="14"/>
</g>
<g transform="translate(115.5,10.8) scale(0.262)">
<line x1="2" y1="20" x2="44" y2="20" stroke-width="8"/>
<line x1="26" y1="2" x2="10" y2="50" stroke-width="12"/>
<line x1="10" y1="50" x2="44" y2="48" stroke-width="8"/>
<line x1="28" y1="28" x2="28" y2="98" stroke-width="15"/>
<line x1="2" y1="76" x2="46" y2="70" stroke-width="8"/>
<line x1="62" y1="2" x2="50" y2="34" stroke-width="13"/>
<line x1="56" y1="26" x2="94" y2="26" stroke-width="8"/>
<line x1="94" y1="26" x2="86" y2="44" stroke-width="10"/>
<line x1="72" y1="36" x2="46" y2="98" stroke-width="15"/>
<line x1="72" y1="58" x2="98" y2="96" stroke-width="15"/>
</g>
<g transform="translate(143,10.8) scale(0.262)">
<line x1="28" y1="2" x2="4" y2="48" stroke-width="14"/>
<line x1="17" y1="32" x2="17" y2="98" stroke-width="16"/>
<line x1="48" y1="8" x2="38" y2="36" stroke-width="12"/>
<line x1="40" y1="34" x2="94" y2="34" stroke-width="8"/>
<line x1="30" y1="62" x2="98" y2="62" stroke-width="8"/>
<line x1="66" y1="2" x2="66" y2="98" stroke-width="16"/>
</g>
<g transform="translate(170.5,10.8) scale(0.262)">
<line x1="8" y1="6" x2="8" y2="98" stroke-width="16"/>
<line x1="92" y1="6" x2="92" y2="98" stroke-width="16"/>
<line x1="8" y1="8" x2="92" y2="8" stroke-width="8"/>
<line x1="8" y1="92" x2="92" y2="92" stroke-width="8"/>
<line x1="28" y1="26" x2="72" y2="26" stroke-width="7"/>
<line x1="20" y1="46" x2="80" y2="46" stroke-width="7"/>
<line x1="42" y1="46" x2="26" y2="78" stroke-width="12"/>
<line x1="58" y1="46" x2="58" y2="74" stroke-width="12"/>
<line x1="58" y1="74" x2="80" y2="74" stroke-width="8"/>
</g>
</g>
<text x="61.7" y="57.6" font-family="Liberation Serif" font-weight="bold" font-size="18.5" fill="#2d812d" stroke="#2d812d" stroke-width="0.4" textLength="133.3" lengthAdjust="spacingAndGlyphs">www.pc0359.cn</text>
<text x="126.8" y="15.8" font-family="Liberation Sans" font-weight="normal" font-size="10.47" fill="#22b8a2" textLength="48.4" lengthAdjust="spacingAndGlyphs">MIDI LEARN</text>
<text x="126.8" y="38.7" font-family="Liberation Sans" font-weight="normal" font-size="12.94" fill="#bababa" textLength="16.9" lengthAdjust="spacingAndGlyphs">Off</text>
<text x="219.7" y="15.8" font-family="Liberation Sans" font-weight="normal" font-size="10.47" fill="#22b8a2" textLength="29.8" lengthAdjust="spacingAndGlyphs">TEMPO</text>
<text x="219.7" y="38.7" font-family="Liberation Sans" font-weight="normal" font-size="12.94" fill="#bababa" textLength="19.9" lengthAdjust="spacingAndGlyphs">120</text>
<text x="293.5" y="15.8" font-family="Liberation Sans" font-weight="normal" font-size="10.47" fill="#22b8a2" textLength="27.5" lengthAdjust="spacingAndGlyphs">PATCH</text>
<text x="293.5" y="38.7" font-family="Liberation Sans" font-weight="normal" font-size="12.94" fill="#bababa" textLength="67.7" lengthAdjust="spacingAndGlyphs">Dizzy Rave *</text>
</svg></body></html>
